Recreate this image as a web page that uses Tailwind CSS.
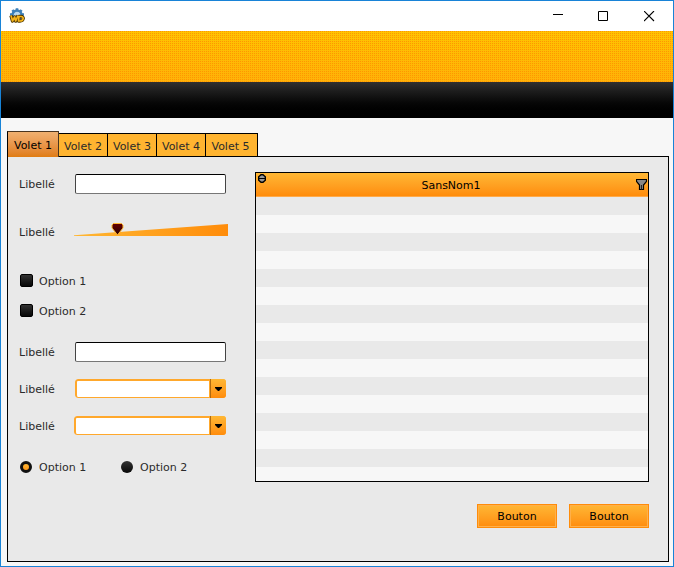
<!DOCTYPE html>
<html lang="fr">
<head>
<meta charset="utf-8">
<meta name="viewport" content="width=device-width, initial-scale=1">
<title>Volets</title>
<script src="https://cdn.jsdelivr.net/npm/@tailwindcss/browser@4"></script>
</head>
<body class="flex min-h-screen flex-col border border-[#1883d7] bg-[#f7f7f7] font-['DejaVu_Sans',Verdana,sans-serif] text-[11px] leading-4 text-[#2b2b2b]">
<header>
  <div class="flex h-[30px] items-center bg-white pl-2">
    <svg class="h-4 w-4" viewBox="0 0 16 16" aria-hidden="true">
      <circle cx="8" cy="7" r="4.5" fill="#b9d9ef" stroke="#3c7fb8" stroke-width="2.4"/>
      <path d="M8 .2v3M3.4 2l2 2.300M12.600 2l-2 2.300M1 6.500h3M15 6.500h-3" stroke="#3c7fb8" stroke-width="2.600"/>
      <path d="M2 7.500l1.500 5.500 2.200-4 1 4 2.400-5.500M10 8.500h2c3.500 0 2.500 4.500-1 4.500H9.500z" fill="none" stroke="#493300" stroke-width="3.400" stroke-linejoin="round"/>
      <path d="M2 7.500l1.500 5.500 2.200-4 1 4 2.400-5.500M10 8.500h2c3.500 0 2.500 4.500-1 4.500H9.500z" fill="none" stroke="#f5b51b" stroke-width="1.700" stroke-linejoin="round"/>
    </svg>
    <div class="ml-auto flex text-black">
      <button class="flex h-[30px] w-[45px] items-center justify-center" aria-label="Réduire"><svg class="h-[11px] w-[11px]" viewBox="0 0 11 11"><path d="M0 3.500h10" stroke="currentColor"/></svg></button>
      <button class="flex h-[30px] w-[45px] items-center justify-center" aria-label="Agrandir"><svg class="h-[11px] w-[11px]" viewBox="0 0 11 11"><path d="M.5.500h9v9h-9z" fill="none" stroke="currentColor"/></svg></button>
      <button class="flex h-[30px] w-[47px] items-center justify-center" aria-label="Fermer"><svg class="h-[11px] w-[11px]" viewBox="0 0 11 11"><path d="M0 0l10 10M10 0L0 10" stroke="currentColor" stroke-width="1.100"/></svg></button>
    </div>
  </div>
  <div class="bg-linear-to-b from-[#ffc400] to-[#ffb208]"><div class="h-[51px] bg-[conic-gradient(#ff9600_25%,transparent_0)] bg-size-[2px_2px]"></div></div>
  <div class="h-9 bg-linear-to-b from-[#303030] to-black"></div>
</header>
<main class="flex flex-1 flex-col pt-[13px] pr-1 pb-1 pl-1.5">
  <div class="relative z-10 -mb-px flex items-end" role="tablist">
    <button role="tab" aria-selected="true" class="h-[26px] w-[52px] border border-b-0 border-[#4a3520] border-l-black bg-linear-to-b from-[#f0b070] to-[#e07c10] pt-0.5 text-black">Volet 1</button>
    <button role="tab" class="h-6 w-[49px] border-y border-r border-black bg-[#ffb430] pt-1">Volet 2</button>
    <button role="tab" class="h-6 w-[49px] border-y border-r border-black bg-[#ffb430] pt-1">Volet 3</button>
    <button role="tab" class="h-6 w-[49px] border-y border-r border-black bg-[#ffb430] pt-1">Volet 4</button>
    <button role="tab" class="h-6 w-[52px] border-y border-r border-black bg-[#ffb430] pt-1 pr-0.5">Volet 5</button>
  </div>
  <section role="tabpanel" class="flex-1 border border-black bg-[#e9e9e9] pt-[15px] pr-[19px] pb-8 pl-[11px]">
    <div class="flex gap-[27px]">
      <form class="w-[209px] shrink-0 pt-0.5">
        <div class="flex h-5 items-center"><label for="t1" class="w-14 pt-0.5">Libellé</label><input id="t1" class="h-5 w-[151px] rounded-[2px] border border-[#444] border-t-black border-b-[#777] bg-white px-1"></div>
        <div class="mt-7 flex h-5 items-center"><label for="s1" class="w-[55px] pt-0.5">Libellé</label>
          <div class="relative h-4 flex-1">
            <svg class="h-4 w-full overflow-visible" viewBox="0 0 154 16" aria-hidden="true">
              <defs>
                <linearGradient id="wedge"><stop stop-color="#ffb733"/><stop offset="1" stop-color="#ff8c0a"/></linearGradient>
                <linearGradient id="knob" x2="0" y2="1"><stop stop-color="#600"/><stop offset="1" stop-color="#2a0000"/></linearGradient>
              </defs>
              <path d="M0 11.300L154 0V12H0z" fill="url(#wedge)"/>
              <path id="thumb" d="M39.500-.5h8l1.500 1.500v3l-5.500 7L38 4V1z" fill="url(#knob)" stroke="#ffb733"/>
            </svg>
            <input id="s1" type="range" value="26" class="absolute inset-0 w-full cursor-pointer opacity-0" oninput="document.getElementById('thumb').setAttribute('transform','translate('+(this.value-26)*1.45+' 0)')">
          </div>
        </div>
        <label class="mt-[29px] flex h-[19px] items-center gap-1.5 pl-px"><input type="checkbox" class="h-[13px] w-[13px] appearance-none rounded-[2px] border border-black bg-linear-to-b from-[#333] to-[#080808] checked:from-[#ffb733] checked:to-[#ff9818]"><span class="pt-0.5">Option 1</span></label>
        <label class="mt-[11px] flex h-[19px] items-center gap-1.5 pl-px"><input type="checkbox" class="h-[13px] w-[13px] appearance-none rounded-[2px] border border-black bg-linear-to-b from-[#333] to-[#080808] checked:from-[#ffb733] checked:to-[#ff9818]"><span class="pt-0.5">Option 2</span></label>
        <div class="mt-[22px] flex h-5 items-center"><label for="t2" class="w-14 pt-0.5">Libellé</label><input id="t2" class="h-5 w-[151px] rounded-[2px] border border-[#444] border-t-black border-b-[#777] bg-white px-1"></div>
        <div class="mt-[17px] flex h-5 items-center"><label for="c1" class="w-14 pt-0.5">Libellé</label>
          <div class="relative h-[19px] w-[151px] self-start overflow-hidden rounded-[3px]">
            <select id="c1" class="block h-full w-full appearance-none rounded-[3px] border border-t-2 border-l-2 border-[#ffa82c] bg-white px-1"><option></option></select>
            <span class="pointer-events-none absolute inset-y-0 right-0 flex w-[17px] items-center justify-center border-l border-[#ffa82c] bg-linear-to-b from-[#ffb733] to-[#ff8c0a]"><span class="h-full w-px bg-[#b06a10]"></span><svg class="mx-auto h-1 w-[7px]" viewBox="0 0 7 4"><path d="M0 0h7v1L4 4H3L0 1z"/></svg></span>
          </div>
        </div>
        <div class="mt-[17px] flex h-5 items-center"><label for="c2" class="w-[55px] pt-0.5">Libellé</label>
          <div class="relative h-[19px] w-[152px] self-start overflow-hidden rounded-[3px]">
            <select id="c2" class="block h-full w-full appearance-none rounded-[3px] border border-t-2 border-l-2 border-[#ffa82c] bg-white px-1"><option></option></select>
            <span class="pointer-events-none absolute inset-y-0 right-0 flex w-[17px] items-center justify-center border-l border-[#ffa82c] bg-linear-to-b from-[#ffb733] to-[#ff8c0a]"><span class="h-full w-px bg-[#b06a10]"></span><svg class="mx-auto h-1 w-[7px]" viewBox="0 0 7 4"><path d="M0 0h7v1L4 4H3L0 1z"/></svg></span>
          </div>
        </div>
        <div class="mt-[21px] flex h-5 pl-px">
          <label class="flex w-[101px] items-center gap-[7px]"><input type="radio" name="opt" checked class="h-3 w-3 appearance-none rounded-full bg-linear-to-b from-[#333] to-[#080808] checked:border-3 checked:border-[#111] checked:from-[#ffb733] checked:to-[#ff9818]"><span class="pt-0.5">Option 1</span></label>
          <label class="flex items-center gap-[7px]"><input type="radio" name="opt" class="h-3 w-3 appearance-none rounded-full bg-linear-to-b from-[#333] to-[#080808] checked:border-3 checked:border-[#111] checked:from-[#ffb733] checked:to-[#ff9818]"><span class="pt-0.5">Option 2</span></label>
        </div>
      </form>
      <div class="h-[310px] flex-1 overflow-hidden border border-black bg-[#f7f7f7]">
        <table class="w-full border-separate border-spacing-0">
          <thead><tr><th class="relative h-6 border-b border-[#ffaa4a] bg-linear-to-b from-[#ffb733] to-[#ff8c0a] p-0 pt-0.5 pr-0.5 font-normal text-black">
            <svg class="absolute top-px left-0.5 h-[9px] w-[8px]" viewBox="0 0 8 9" aria-hidden="true"><path d="M3 .7h2l2.300 2v3.600l-2.300 2H3l-2.300-2V2.700z" fill="#999" stroke="#000" stroke-width="1.400"/><path d="M0 4.500h8" stroke="#000"/></svg>
            SansNom1
            <svg class="absolute top-1.5 right-px h-[11px] w-[11px]" viewBox="0 0 11 11" aria-hidden="true"><path d="M.5.500h10v2L7.500 6v4.500h-4V6l-3-3.500z" fill="#888" stroke="#000" stroke-width="1.200"/><path d="M5.500 6v4.500" stroke="#222"/></svg>
          </th></tr></thead>
          <tbody class="[&_td]:h-[18px] [&_td]:p-0 [&_tr]:odd:bg-[#e9e9e9] [&_tr]:even:bg-[#f7f7f7]">
            <tr><td></td></tr><tr><td></td></tr><tr><td></td></tr><tr><td></td></tr>
            <tr><td></td></tr><tr><td></td></tr><tr><td></td></tr><tr><td></td></tr>
            <tr><td></td></tr><tr><td></td></tr><tr><td></td></tr><tr><td></td></tr>
            <tr><td></td></tr><tr><td></td></tr><tr><td></td></tr><tr><td></td></tr>
          </tbody>
        </table>
      </div>
    </div>
    <div class="mt-[22px] flex justify-end gap-3">
      <button class="h-6 w-20 border border-[#ff8c0a] bg-linear-to-b from-[#ffb733] to-[#ff8c0a] pt-0.5 text-black inset-ring inset-ring-[#ffb04a]">Bouton</button>
      <button class="h-6 w-20 border border-[#ff8c0a] bg-linear-to-b from-[#ffb733] to-[#ff8c0a] pt-0.5 text-black inset-ring inset-ring-[#ffb04a]">Bouton</button>
    </div>
  </section>
</main>
</body>
</html>
